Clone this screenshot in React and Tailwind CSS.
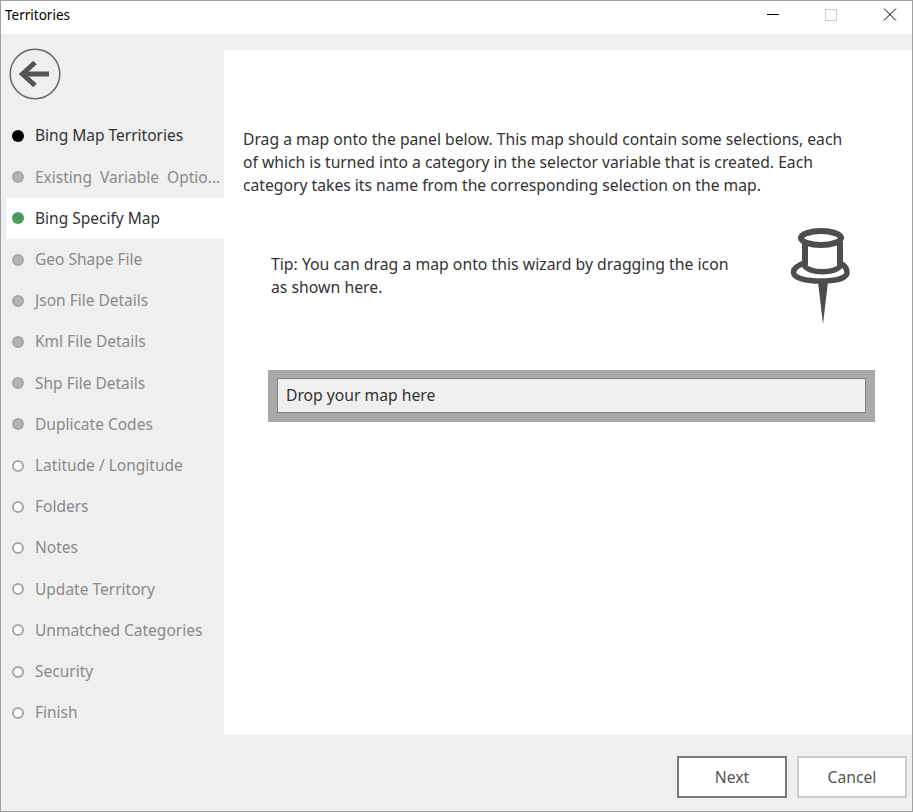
import React from 'react';

const steps = [
  { label: 'Bing Map Territories', state: 'done' },
  { label: 'Existing  Variable  Optio...', state: 'filled' },
  { label: 'Bing Specify Map', state: 'current' },
  { label: 'Geo Shape File', state: 'filled' },
  { label: 'Json File Details', state: 'filled' },
  { label: 'Kml File Details', state: 'filled' },
  { label: 'Shp File Details', state: 'filled' },
  { label: 'Duplicate Codes', state: 'filled' },
  { label: 'Latitude / Longitude', state: 'open' },
  { label: 'Folders', state: 'open' },
  { label: 'Notes', state: 'open' },
  { label: 'Update Territory', state: 'open' },
  { label: 'Unmatched Categories', state: 'open' },
  { label: 'Security', state: 'open' },
  { label: 'Finish', state: 'open' },
];

const StepRow = ({ label, state }) => {
  const active = state === 'current';
  const dark = state === 'done' || active;
  return (
    <div className={`flex items-center h-[41.2px] ml-[5px] ${active ? 'bg-white' : ''}`}>
      <span
        className={`w-[12px] h-[12px] rounded-full ml-[6px] shrink-0 ${
          state === 'done'
            ? 'bg-black'
            : active
            ? 'bg-[#4c9a5e]'
            : state === 'filled'
            ? 'bg-[#b4b4b4] border-2 border-[#a6a6a6]'
            : 'bg-white border-2 border-[#a6a6a6]'
        }`}
      />
      <span className={`ml-[11px] text-[15.5px] whitespace-pre ${dark ? 'text-[#333333]' : 'text-[#8a8a8a]'}`}>{label}</span>
    </div>
  );
};

const PushPin = () => (
  <svg width="60" height="97" viewBox="0 0 60 97" fill="none" stroke="#4d4d4d" strokeWidth="6">
    <ellipse cx="31" cy="10" rx="20" ry="7" />
    <path d="M15 14V37M50 14V37" />
    <path d="M15 35C8 37 3.5 40 3.5 44.5C3.5 50 16 53 31 53C46 53 57 50 57 44.5C57 40 54 37 50 35" strokeWidth="5.5" />
    <path d="M14 37C18 46 47 46 51 37" strokeWidth="5.5" />
    <path d="M28 54L33 96L38 54Z" fill="#4d4d4d" stroke="none" />
  </svg>
);

export default function App() {
  return (
    <div
      className="w-[913px] h-[812px] flex flex-col bg-[#efefef] border border-[#a0a0a0] overflow-hidden text-[15.7px] text-[#333333]"
      style={{ fontFamily: '"Noto Sans", sans-serif' }}
    >
      {/* Title bar */}
      <div className="flex items-center justify-between h-[33px] pb-[5px] bg-white shrink-0">
        <span className="ml-[4px] text-[13.5px] text-black">Territories</span>
        <svg width="160" height="16" viewBox="0 0 160 16" fill="none">
          <path d="M15 7.5H27" stroke="#000" />
          <rect x="73.5" y="2.5" width="11" height="11" stroke="#cccccc" />
          <path d="M132 1.5L144 13.5M144 1.5L132 13.5" stroke="#000" />
        </svg>
      </div>
      <div className="h-[16px] shrink-0" />

      <div className="flex flex-1 min-h-0">
        {/* Sidebar */}
        <div className="w-[223px] shrink-0">
          <div className="h-[67.5px] -mt-[2px] pl-[8px]">
            <svg width="52" height="52" viewBox="0 0 52 52" fill="none">
              <circle cx="26" cy="26" r="24.8" stroke="#666666" strokeWidth="1.5" />
              <path d="M40 26H15" stroke="#555555" strokeWidth="5" />
              <path d="M26 14.5L13.5 26L26 37.5" stroke="#555555" strokeWidth="5" />
            </svg>
          </div>
          {steps.map((s) => (
            <StepRow key={s.label} label={s.label} state={s.state} />
          ))}
        </div>

        {/* Main panel */}
        <div className="flex-1 bg-white pl-[19px] pt-[78px]">
          <p className="w-[610px] leading-[23px]">
            Drag a map onto the panel below. This map should contain some selections, each of which is turned into a
            category in the selector variable that is created. Each category takes its name from the corresponding
            selection on the map.
          </p>
          <div className="flex mt-[26px] ml-[28px] h-[112px]">
            <p className="w-[466px] text-[15.8px] leading-[23px] pt-[30px]">
              Tip: You can drag a map onto this wizard by dragging the icon as shown here.
            </p>
            <div className="ml-[53px] mt-[5px]">
              <PushPin />
            </div>
          </div>
          <div className="mt-[35px] ml-[25px] w-[607px] h-[52px] bg-[#a9a9a9] pl-[9px] pt-[8px] pr-[9px] pb-[9px]">
            <div className="h-full bg-[#efefef] border border-[#808080] flex items-center pl-[8px]">Drop your map here</div>
          </div>
        </div>
      </div>

      {/* Footer */}
      <div className="h-[76px] shrink-0 flex justify-end items-start pt-[21px] pr-[5px] gap-[10px]">
        <button className="w-[110px] h-[42px] pt-[1px] bg-white border-2 border-[#7a7a7a] text-[#555555]">Next</button>
        <button className="w-[110px] h-[42px] pt-[1px] bg-white border-2 border-[#cccccc] text-[#555555]">Cancel</button>
      </div>
    </div>
  );
}
